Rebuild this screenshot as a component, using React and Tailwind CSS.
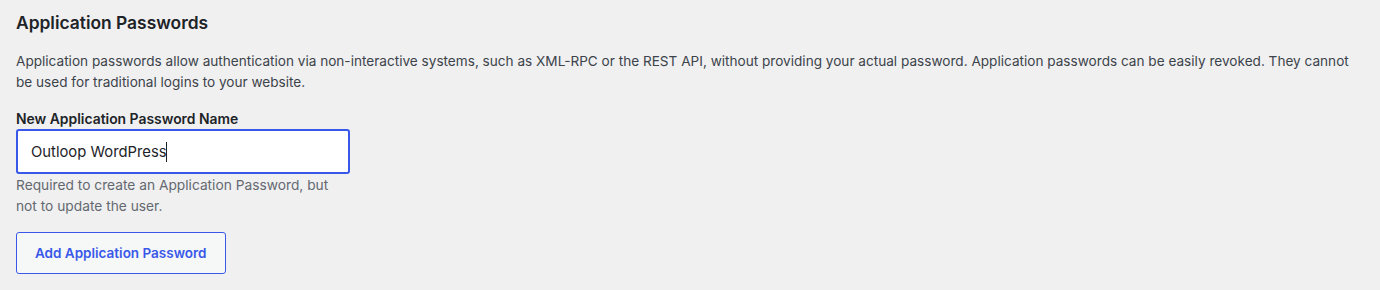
import { useState } from "react";

const App = () => {
    const [name, setName] = useState("Outloop WordPress");

    return (
        <div
            className="min-h-[290px] w-full bg-[#f0f0f1] px-4 pt-[12px] text-[#1d2327]"
            style={{ fontFamily: "Inter, 'Noto Sans', sans-serif" }}
        >
            <h2 className="text-[17.4px] font-semibold leading-[22px]">Application Passwords</h2>

            <p className="mt-[17px] text-[13.6px] leading-[21px] text-[#3c434a]">
                Application passwords allow authentication via non-interactive systems, such as XML-RPC or the REST API,
                without providing your actual password. Application passwords can be easily revoked. They cannot be used
                for traditional logins to your website.
            </p>

            {/* Name field */}
            <div className="mt-[17px] w-[334px]">
                <label className="block text-[13.9px] font-semibold leading-[18px]">New Application Password Name</label>
                <div className="relative mt-[1px]">
                    <input
                        value={name}
                        onChange={(e) => setName(e.target.value)}
                        className="h-[45px] w-full rounded-[3px] border-2 border-[#3858e9] bg-white px-[13px] text-[14.8px] text-[#1d2327] outline-none"
                    />
                    {/* caret */}
                    <span className="pointer-events-none absolute left-[150px] top-[13px] h-[20px] w-px bg-[#1d2327]" />
                </div>
                <p className="mt-[1px] text-[13.75px] leading-[21px] text-[#646970]">
                    Required to create an Application Password, but not to update the user.
                </p>
            </div>

            <button
                type="button"
                className="mt-[15px] h-[42px] rounded-[3px] border border-[#3858e9] bg-[#f6f7f7] px-[18px] text-[13.5px] font-semibold text-[#3858e9]"
            >
                Add Application Password
            </button>
        </div>
    );
};

export default App;
